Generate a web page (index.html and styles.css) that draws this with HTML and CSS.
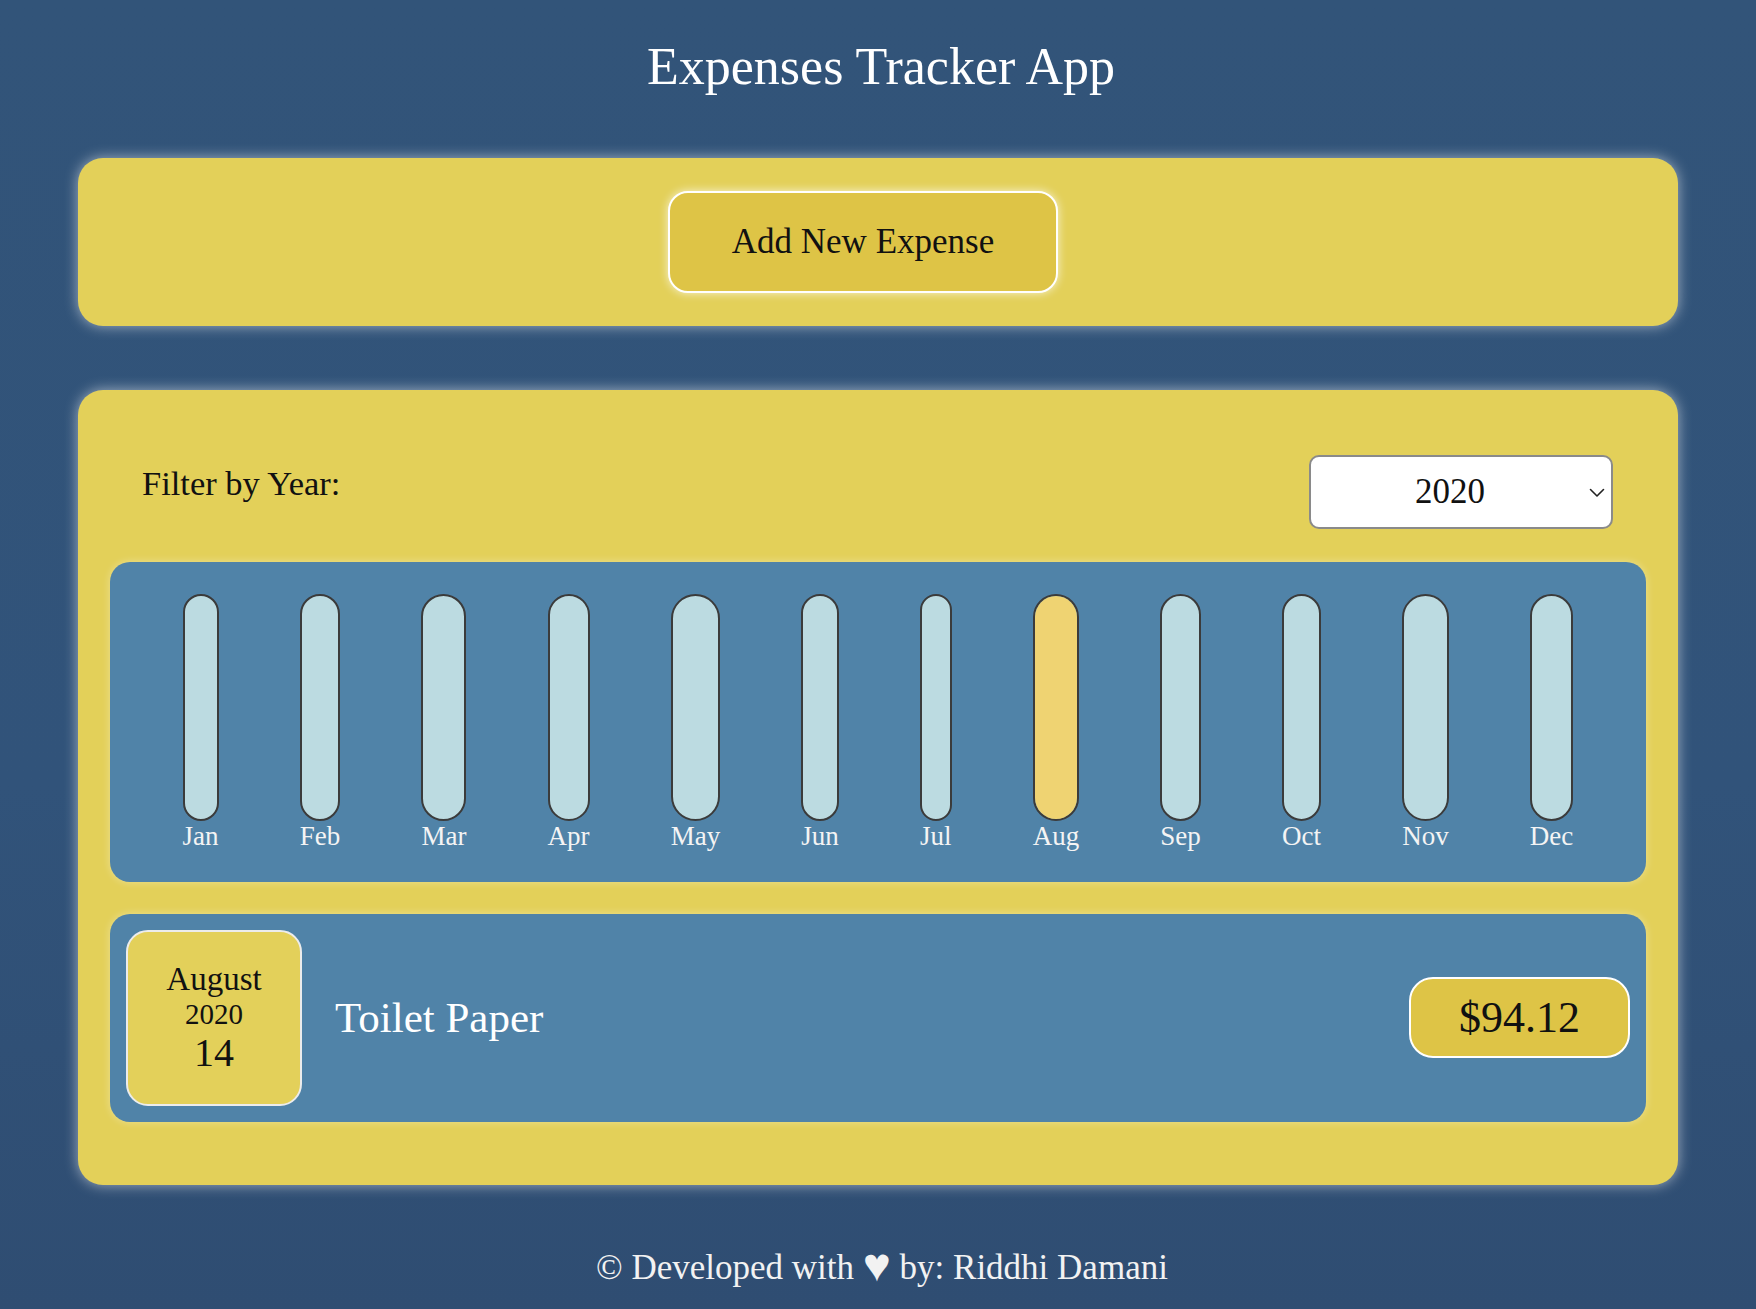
FILE: index.html
```html
<!DOCTYPE html>
<html lang="en">
<head>
<meta charset="utf-8">
<title>Expenses Tracker App</title>
<link rel="stylesheet" href="styles.css">
</head>
<body>
  <h1 class="app-title">Expenses Tracker App</h1>

  <section class="card new-expense">
    <button class="add-btn" type="button">Add New Expense</button>
  </section>

  <section class="card expenses">
    <div class="filter">
      <label class="filter-label" for="year">Filter by Year:</label>
      <div class="select-wrap">
        <select id="year" class="year-select">
          <option>2022</option>
          <option>2021</option>
          <option selected>2020</option>
          <option>2019</option>
        </select>
        <svg class="chevron" width="16" height="10" viewBox="0 0 16 10" aria-hidden="true">
          <polyline points="1.5,1.5 8,8 14.5,1.5" fill="none" stroke="#222" stroke-width="1.6" stroke-linecap="round" stroke-linejoin="round"/>
        </svg>
      </div>
    </div>

    <div class="chart">
      <div class="bar-col"><div class="bar"><div class="bar-fill" style="height:0%"></div></div><div class="bar-label">Jan</div></div>
      <div class="bar-col"><div class="bar"><div class="bar-fill" style="height:0%"></div></div><div class="bar-label">Feb</div></div>
      <div class="bar-col"><div class="bar"><div class="bar-fill" style="height:0%"></div></div><div class="bar-label">Mar</div></div>
      <div class="bar-col"><div class="bar"><div class="bar-fill" style="height:0%"></div></div><div class="bar-label">Apr</div></div>
      <div class="bar-col"><div class="bar"><div class="bar-fill" style="height:0%"></div></div><div class="bar-label">May</div></div>
      <div class="bar-col"><div class="bar"><div class="bar-fill" style="height:0%"></div></div><div class="bar-label">Jun</div></div>
      <div class="bar-col"><div class="bar"><div class="bar-fill" style="height:0%"></div></div><div class="bar-label">Jul</div></div>
      <div class="bar-col"><div class="bar"><div class="bar-fill" style="height:100%"></div></div><div class="bar-label">Aug</div></div>
      <div class="bar-col"><div class="bar"><div class="bar-fill" style="height:0%"></div></div><div class="bar-label">Sep</div></div>
      <div class="bar-col"><div class="bar"><div class="bar-fill" style="height:0%"></div></div><div class="bar-label">Oct</div></div>
      <div class="bar-col"><div class="bar"><div class="bar-fill" style="height:0%"></div></div><div class="bar-label">Nov</div></div>
      <div class="bar-col"><div class="bar"><div class="bar-fill" style="height:0%"></div></div><div class="bar-label">Dec</div></div>
    </div>

    <div class="expense-item">
      <div class="expense-date">
        <div class="date-month">August</div>
        <div class="date-year">2020</div>
        <div class="date-day">14</div>
      </div>
      <h2 class="expense-title">Toilet Paper</h2>
      <div class="expense-price">$94.12</div>
    </div>
  </section>

  <footer class="footer">© Developed with <span class="heart">♥</span> by: Riddhi Damani</footer>
</body>
</html>
```

FILE: styles.css
```css
* {
  box-sizing: border-box;
}

html, body {
  margin: 0;
  padding: 0;
}

body {
  min-height: 100vh;
  background: linear-gradient(180deg, #325479 0%, #31537a 60%, #2f4d72 100%);
  font-family: "Liberation Serif", "DejaVu Serif", serif;
  color: #111;
  display: flex;
  flex-direction: column;
  align-items: center;
}

.app-title {
  margin: 37px 0 0;
  font-size: 52px;
  font-weight: 400;
  line-height: 1.15;
  color: #fff;
  text-align: center;
  padding-left: 6px;
}

.card {
  width: 1600px;
  background: #e3d059;
  border-radius: 25px;
  box-shadow: 0 0 14px rgba(255, 255, 255, 0.55);
}

.new-expense {
  margin-top: 61px;
  height: 168px;
  display: flex;
  justify-content: center;
  align-items: center;
}

.add-btn {
  width: 390px;
  height: 102px;
  margin-right: 30px;
  background: #dec446;
  border: 2px solid #fff;
  border-radius: 20px;
  box-shadow: 0 0 10px rgba(255, 255, 255, 0.75);
  font-family: inherit;
  font-size: 35px;
  line-height: 1.15;
  color: #111;
  padding: 0;
  cursor: pointer;
}

.expenses {
  margin-top: 64px;
  padding: 32px 32px 63px;
}

.filter {
  margin-top: 33px;
  display: flex;
  justify-content: space-between;
  align-items: flex-start;
  padding: 0 33px 0 32px;
}

.filter-label {
  margin-top: 9px;
  font-size: 34.5px;
  line-height: 1.15;
  color: #111;
}

.select-wrap {
  position: relative;
  width: 304px;
  height: 74px;
}

.year-select {
  -webkit-appearance: none;
  appearance: none;
  width: 100%;
  height: 100%;
  background: #fff;
  border: 2px solid #8a8a8a;
  border-radius: 10px;
  font-family: inherit;
  font-size: 35px;
  color: #111;
  text-align: center;
  text-align-last: center;
  padding: 0 22px 0 0;
  margin: 0;
}

.chevron {
  position: absolute;
  right: 8px;
  top: 33px;
  pointer-events: none;
}

.chart {
  margin-top: 33px;
  height: 320px;
  background: #5083a8;
  border-radius: 20px;
  padding: 32px 32px 30px;
  display: flex;
  justify-content: space-around;
  align-items: flex-start;
  box-shadow: 0 0 8px rgba(255, 255, 255, 0.35);
}

.bar-col {
  display: flex;
  flex-direction: column;
  align-items: stretch;
}

.bar {
  height: 227px;
  border: 2px solid #3b3b3b;
  border-radius: 999px;
  background: #bcdbe1;
  overflow: hidden;
  display: flex;
  flex-direction: column;
  justify-content: flex-end;
}

.bar-fill {
  width: 100%;
  background: #efd372;
}

.bar-label {
  font-size: 27px;
  line-height: 1.15;
  color: #f4f4f4;
  text-align: center;
}

.expense-item {
  margin-top: 32px;
  height: 208px;
  background: #5083a8;
  border-radius: 20px;
  padding: 16px;
  display: flex;
  align-items: center;
  box-shadow: 0 0 8px rgba(255, 255, 255, 0.35);
}

.expense-date {
  width: 176px;
  height: 176px;
  flex: none;
  background: #e3d05a;
  border: 2px solid #ececec;
  border-radius: 22px;
  display: flex;
  flex-direction: column;
  justify-content: center;
  align-items: center;
  color: #111;
}

.date-month {
  font-size: 33px;
  line-height: 38px;
}

.date-year {
  font-size: 29px;
  line-height: 32px;
}

.date-day {
  font-size: 40px;
  line-height: 46px;
}

.expense-title {
  margin: 0 0 0 33px;
  flex: 1;
  font-size: 43px;
  font-weight: 400;
  line-height: 1.15;
  color: #fff;
}

.expense-price {
  height: 81px;
  padding: 0 48px;
  display: flex;
  align-items: center;
  background: #dec446;
  border: 2px solid #fff;
  border-radius: 24px;
  font-size: 44px;
  line-height: 1.15;
  color: #111;
}

.footer {
  margin-top: 63px;
  font-size: 35px;
  line-height: 1.15;
  color: #f2f2f2;
  text-align: center;
  padding-left: 8px;
}

.heart {
  font-size: 1.35em;
  line-height: 0;
  vertical-align: -2px;
}
```
